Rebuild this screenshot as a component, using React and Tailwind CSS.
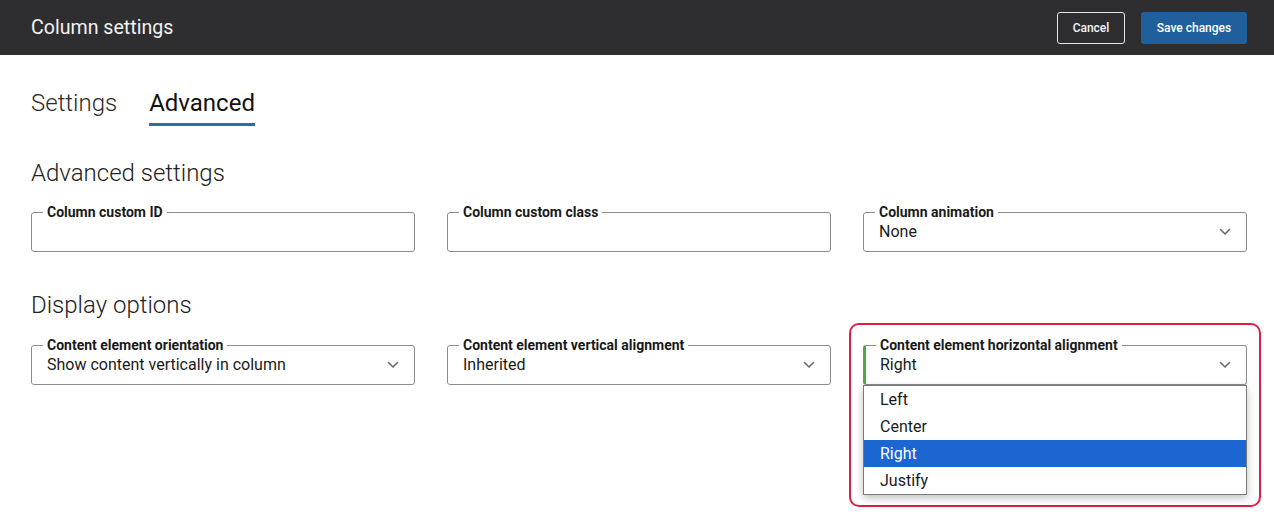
import React from "react";

const Chevron = () => (
  <svg width="12" height="8" viewBox="0 0 12 8" className="shrink-0">
    <path d="M1.5 1.5 L6 6 L10.5 1.5" fill="none" stroke="#6b6b6b" strokeWidth="1.6" strokeLinecap="round" strokeLinejoin="round" />
  </svg>
);

function Field({ label, value, select, accent }) {
  return (
    <fieldset
      className={`h-[48px] rounded-[3px] border border-[#8c8c8c] pr-[15px] pt-[2px] pb-[9px] min-w-0 ${accent ? "border-l-[3px] border-l-[#4caa4a] pl-[14px]" : "pl-[15px]"}`}
    >
      <legend className="ml-[-4px] px-[4px] text-[14px] leading-[16px] font-bold text-[#1a1a1a]">{label}</legend>
      <div className="flex items-center justify-between h-[20px]">
        <span className="text-[16px] leading-[20px] text-[#1a1a1a]">{value}</span>
        {select && <Chevron />}
      </div>
    </fieldset>
  );
}

export default function App() {
  return (
    <div className="w-[1274px] h-[515px] bg-white overflow-hidden" style={{ fontFamily: "Roboto, 'Liberation Sans', sans-serif" }}>
      <header className="h-[55px] bg-[#2e2e31] flex items-center justify-between pl-[31px] pr-[27px]">
        <h1 className="text-[19.6px] text-[#f2f2f2] font-normal leading-none">Column settings</h1>
        <div className="flex items-center gap-4">
          <button className="h-[32px] w-[68px] rounded-[3px] border border-[#e6e6e6] text-[12px] font-medium text-[#f4f4f4]">Cancel</button>
          <button className="h-[32px] w-[106px] rounded-[3px] bg-[#1f5f9c] text-[12px] font-medium text-white">Save changes</button>
        </div>
      </header>

      <div className="pl-[31px]">
        <nav className="flex gap-[32px] pt-[34px]">
          <div className="text-[24px] leading-[28px] font-light text-[#2a2a2a] pb-[9px]">Settings</div>
          <div className="text-[24px] leading-[28px] font-normal text-[#111] border-b-[3px] border-[#2b6ea9] pb-[6px]">Advanced</div>
        </nav>

        <h2 className="mt-[33px] text-[24px] leading-[28px] font-light text-[#222]">Advanced settings</h2>
        <div className="mt-[17px] w-[1216px] grid grid-cols-3 gap-8">
          <Field label="Column custom ID" value="" />
          <Field label="Column custom class" value="" />
          <Field label="Column animation" value="None" select />
        </div>

        <h2 className="mt-[39px] text-[24px] leading-[28px] font-light text-[#222]">Display options</h2>
        <div className="mt-[18px] w-[1216px] grid grid-cols-3 gap-8">
          <Field label="Content element orientation" value="Show content vertically in column" select />
          <Field label="Content element vertical alignment" value="Inherited" select />
          <div className="relative">
            <div className="absolute left-[-14px] right-[-14px] top-[-14px] h-[184px] rounded-[10px] border-2 border-[#dc1f43] pointer-events-none" />
            <Field label="Content element horizontal alignment" value="Right" select accent />
            <ul className="absolute left-0 right-0 top-[48px] bg-white border border-[#7a7a7a] shadow-[0_3px_8px_rgba(0,0,0,0.25)] py-0">
              {["Left", "Center", "Right", "Justify"].map((o) => (
                <li
                  key={o}
                  className={`h-[27px] pl-[16px] flex items-center text-[16px] ${o === "Right" ? "bg-[#1b66d1] text-white" : "text-[#1a1a1a]"}`}
                >
                  {o}
                </li>
              ))}
            </ul>
          </div>
        </div>
      </div>
    </div>
  );
}
